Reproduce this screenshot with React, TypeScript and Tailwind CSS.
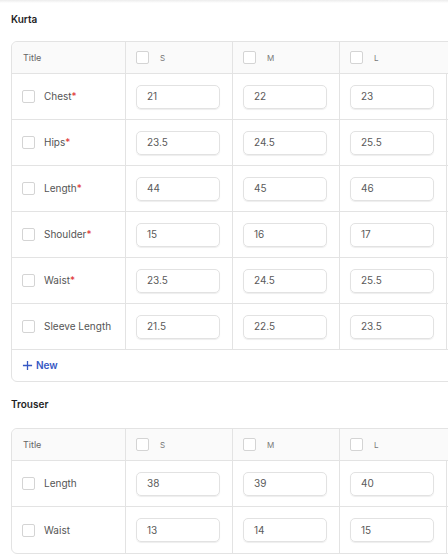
import React from 'react';

type Row = { title: string; required: boolean; values: string[] };

const kurtaRows: Row[] = [
  { title: 'Chest', required: true, values: ['21', '22', '23'] },
  { title: 'Hips', required: true, values: ['23.5', '24.5', '25.5'] },
  { title: 'Length', required: true, values: ['44', '45', '46'] },
  { title: 'Shoulder', required: true, values: ['15', '16', '17'] },
  { title: 'Waist', required: true, values: ['23.5', '24.5', '25.5'] },
  { title: 'Sleeve Length', required: false, values: ['21.5', '22.5', '23.5'] },
];

const trouserRows: Row[] = [
  { title: 'Length', required: false, values: ['38', '39', '40'] },
  { title: 'Waist', required: false, values: ['13', '14', '15'] },
];

const sizes = ['S', 'M', 'L'];

function Checkbox() {
  return <span className="block w-[13px] h-[13px] shrink-0 rounded-[2px] border border-[#d4d4d4] bg-white" />;
}

function SizeTable({ rows, showNew }: { rows: Row[]; showNew: boolean }) {
  return (
    <div className="w-[640px] rounded-[6px] border border-[#e3e3e3] bg-white">
      {/* header */}
      <div className="flex h-[32px] border-b border-[#e3e3e3] bg-[#fafafa] rounded-t-[6px]">
        <div className="w-[114px] shrink-0 border-r border-[#e3e3e3] flex items-center pl-[11px] text-[9px] text-[#666]">
          Title
        </div>
        {sizes.map((s, i) => (
          <div
            key={s}
            className={`w-[107px] shrink-0 flex items-center gap-[11px] pl-[10px] text-[8px] text-[#777] ${
              i < 2 ? 'border-r border-[#e3e3e3]' : ''
            }`}
          >
            <Checkbox />
            <span>{s}</span>
          </div>
        ))}
        <div className="flex-1" />
      </div>

      {rows.map((row, ri) => (
        <div
          key={row.title}
          className={`flex h-[46px] ${ri < rows.length - 1 || showNew ? 'border-b border-[#e3e3e3]' : ''}`}
        >
          <div className="w-[114px] shrink-0 border-r border-[#e3e3e3] flex items-center gap-[9px] pl-[10px] text-[10px] text-[#555]">
            <Checkbox />
            <span>
              {row.title}
              {row.required && <span className="text-[#e03131]">*</span>}
            </span>
          </div>
          {row.values.map((v) => (
            <div key={v + row.title} className="w-[107px] shrink-0 border-r border-[#e3e3e3] flex items-center pl-[10px]">
              <div className="w-[84px] h-[24px] rounded-[5px] border border-[#e2e2e2] shadow-[0_1px_1px_rgba(0,0,0,0.07)] flex items-center px-[10px] text-[10px] text-[#5a5a5a]">
                {v}
              </div>
            </div>
          ))}
          <div className="flex-1" />
        </div>
      ))}

      {showNew && (
        <div className="h-[31px] flex items-center pl-[10px] gap-[3px] text-[10px] font-semibold text-[#3658c4]">
          <svg width="11" height="11" viewBox="0 0 12 12" fill="none" stroke="currentColor" strokeWidth="1.4">
            <path d="M6 1v10M1 6h10" />
          </svg>
          <span>New</span>
        </div>
      )}
    </div>
  );
}

export default function App() {
  return (
    <div className="w-[448px] h-[556px] overflow-hidden bg-white relative" style={{ fontFamily: 'Inter, "Noto Sans", sans-serif' }}>
      <div className="h-[3px] bg-gradient-to-b from-[#ececec] to-white" />
      <div className="pl-[11px]">
        <div className="pt-[9px] h-[14px] box-content text-[10px] font-semibold text-[#1f1f1f] leading-[14px]">Kurta</div>
        <div className="mt-[15px]">
          <SizeTable rows={kurtaRows} showNew={true} />
        </div>
        <div className="mt-[15px] h-[14px] text-[10px] font-semibold text-[#1f1f1f] leading-[14px]">Trouser</div>
        <div className="mt-[17px]">
          <SizeTable rows={trouserRows} showNew={false} />
        </div>
      </div>
    </div>
  );
}
